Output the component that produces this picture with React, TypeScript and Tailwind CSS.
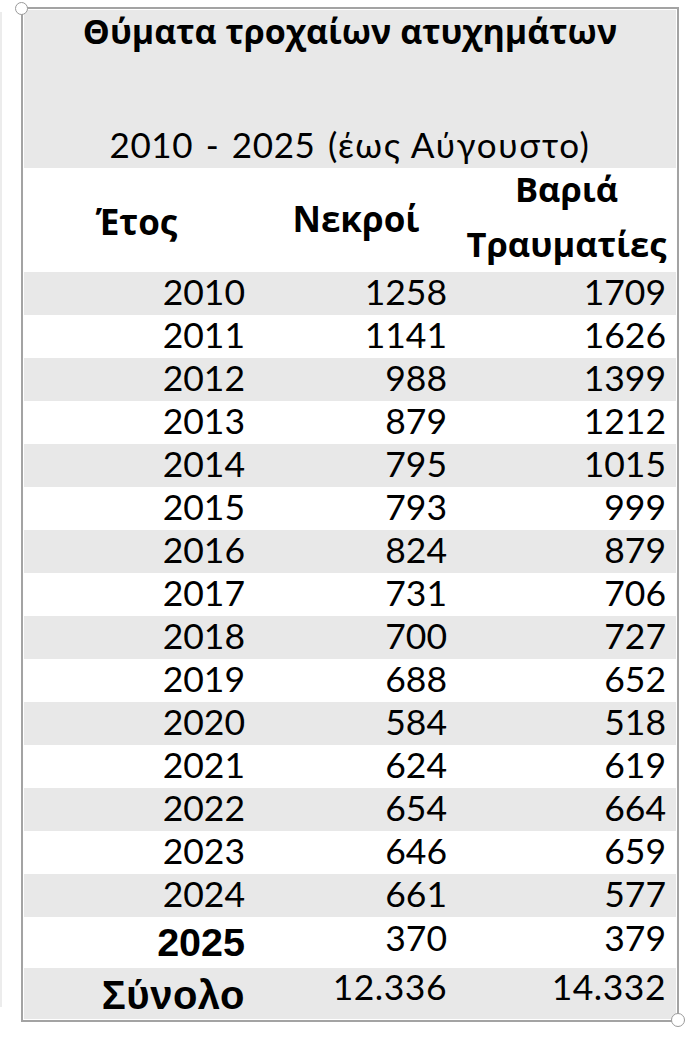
import React from "react";

const rows: [string, string, string][] = [
  ["2010", "1258", "1709"],
  ["2011", "1141", "1626"],
  ["2012", "988", "1399"],
  ["2013", "879", "1212"],
  ["2014", "795", "1015"],
  ["2015", "793", "999"],
  ["2016", "824", "879"],
  ["2017", "731", "706"],
  ["2018", "700", "727"],
  ["2019", "688", "652"],
  ["2020", "584", "518"],
  ["2021", "624", "619"],
  ["2022", "654", "664"],
  ["2023", "646", "659"],
  ["2024", "661", "577"],
];

const num = "font-['Lato','Open_Sans',sans-serif] text-[35.5px] text-black";

export default function App() {
  return (
    <div className="w-[690px] h-[1040px] bg-white flex flex-row relative overflow-hidden">
      <div className="w-[21px] shrink-0 pt-[12px]">
        <div className="h-[995px] w-[2px] bg-[#ececec]" />
      </div>
      <div className="mt-[7px] w-[658px] h-[1015px] border-2 border-[#a3a3a3] p-[1px] relative">
        <div className="flex flex-col w-full">
          {/* title */}
          <div className="h-[158px] bg-[#e8e8e8] flex flex-col items-center">
            <div className="font-['Open_Sans',sans-serif] font-bold text-[34px] leading-none mt-[4px] text-black tracking-[0px]">
              Θύματα τροχαίων ατυχημάτων
            </div>
            <div className="font-['Lato','Open_Sans',sans-serif] text-[35px] leading-none mt-[79px] text-black whitespace-pre">
              <span className="tracking-[0.6px] [word-spacing:3px]">2010 - 2025 </span>
              <span className="tracking-[1.6px]">(έως Αύγουστο)</span>
            </div>
          </div>
          {/* header */}
          <div className="h-[104px] bg-white flex flex-row font-['Open_Sans',sans-serif] font-bold text-black">
            <div className="w-[231px] flex items-center justify-center text-[35px] leading-none pt-[2px] pr-[6px]">Έτος</div>
            <div className="w-[202px] flex items-center justify-center text-[35px] leading-none -mt-[4px]">Νεκροί</div>
            <div className="flex-1 flex flex-col items-center justify-center text-[34.5px] leading-[55px] -mt-[8px]">
              <span>Βαριά</span>
              <span>Τραυματίες</span>
            </div>
          </div>
          {rows.map((r, i) => (
            <div
              key={r[0]}
              className={`h-[43px] flex flex-row items-center leading-none ${i % 2 === 0 ? "bg-[#e8e8e8]" : "bg-white"}`}
            >
              <div className={`w-[231px] pr-[10px] text-right -mt-[3px] ${num}`}>{r[0]}</div>
              <div className={`w-[202px] pr-[10px] text-right -mt-[3px] ${num}`}>{r[1]}</div>
              <div className={`flex-1 pr-[10px] text-right -mt-[3px] ${num}`}>{r[2]}</div>
            </div>
          ))}
          <div className="h-[51px] flex flex-row bg-white leading-none">
            <div className="w-[231px] pr-[10px] text-right font-['Liberation_Sans',Arial,sans-serif] font-bold text-[39.5px] text-black pt-[6px]">2025</div>
            <div className={`w-[202px] pr-[10px] text-right pt-[3px] ${num}`}>370</div>
            <div className={`flex-1 pr-[10px] text-right pt-[3px] ${num}`}>379</div>
          </div>
          <div className="h-[51px] flex flex-row bg-[#e8e8e8] leading-none">
            <div className="w-[231px] pr-[10px] text-right font-['Liberation_Sans',Arial,sans-serif] font-bold text-[40px] text-black pt-[7px] tracking-[0.5px]">Σύνολο</div>
            <div className={`w-[202px] pr-[10px] text-right pt-[1px] tracking-[0.5px] ${num}`}>12.336</div>
            <div className={`flex-1 pr-[10px] text-right pt-[1px] tracking-[0.5px] ${num}`}>14.332</div>
          </div>
        </div>
        <div className="absolute -left-[8px] -top-[7px] w-[13px] h-[13px] rounded-full bg-white border-[1.5px] border-[#9a9a9a]" />
        <div className="absolute -right-[8px] -bottom-[7px] w-[14px] h-[14px] rounded-full bg-white border-[1.5px] border-[#9a9a9a]" />
      </div>
    </div>
  );
}
